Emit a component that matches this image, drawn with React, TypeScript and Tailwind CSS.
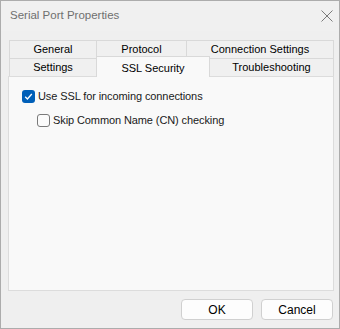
const font = { fontFamily: '"Liberation Sans", Arial, sans-serif' };

const Tab = ({ label, w, first }: { label: string; w: string; first?: boolean }) => (
  <div
    className={`${w} ${first ? "" : "-ml-px"} h-full flex items-center justify-center border border-b-0 border-[#d9d9d9] bg-[#f0f0f0] text-[11px] text-black`}
  >
    {label}
  </div>
);

const CheckRow = ({ label, checked, indent }: { label: string; checked?: boolean; indent?: boolean }) => (
  <div className={`flex items-center gap-[3px] h-[13px] ${indent ? "ml-[15px]" : ""}`}>
    {checked ? (
      <div className="w-[13px] h-[13px] rounded-[3px] bg-[#005fb8] flex items-center justify-center">
        <svg width="9" height="9" viewBox="0 0 9 9">
          <path d="M1.2 4.8 L3.4 7 L7.8 2" fill="none" stroke="#fff" strokeWidth="1.3" />
        </svg>
      </div>
    ) : (
      <div className="w-[13px] h-[13px] rounded-[3px] border border-[#7a7a7a] bg-[#fbfbfb]" />
    )}
    <span className="text-[11px] tracking-[-0.1px] text-[#1a1a1a] leading-none">{label}</span>
  </div>
);

export default function App() {
  return (
    <div style={font} className="w-[340px] h-[329px] border border-[#acacac] bg-[#efefef] flex flex-col">
      <div className="h-[30px] flex items-center justify-between pl-[9px] pr-[6px] bg-[#f0f0f0]">
        <span className="text-[11.5px] text-[#6f6f6f]">Serial Port Properties</span>
        <svg width="12" height="12" viewBox="0 0 12 12">
          <path d="M0.5 0.5 L11.5 11.5 M11.5 0.5 L0.5 11.5" stroke="#7a7a7a" strokeWidth="1" />
        </svg>
      </div>
      <div className="flex-1 flex flex-col pl-[7px] pr-[5px] pt-[9px] pb-[8px]">
        <div className="flex h-[18px] ml-[1px]">
          <Tab label="General" w="w-[88px]" first />
          <Tab label="Protocol" w="w-[91px]" />
          <Tab label="Connection Settings" w="w-[148px]" />
        </div>
        <div className="flex h-[18px] ml-[1px]">
          <Tab label="Settings" w="w-[88px]" first />
          <div className="relative z-10 -ml-px -mt-[2px] h-[21px] w-[114px] flex items-start justify-center pt-[3px] border border-b-0 border-[#d9d9d9] bg-[#f9f9f9] text-[11px] text-black">
            SSL Security
          </div>
          <Tab label="Troubleshooting" w="w-[125px]" />
        </div>
        <div className="h-[215px] border border-[#dcdcdc] bg-[#f9f9f9] flex flex-col gap-[11px] pl-[13px] pt-[13px]">
          <CheckRow label="Use SSL for incoming connections" checked />
          <CheckRow label="Skip Common Name (CN) checking" indent />
        </div>
        <div className="flex-1 flex items-end justify-end gap-[8px] pr-[1px]">
          <button className="w-[72px] h-[21px] rounded-[4px] border border-[#d0d0d0] bg-[#fdfdfd] text-[12px] text-black">
            OK
          </button>
          <button className="w-[72px] h-[21px] rounded-[4px] border border-[#d0d0d0] bg-[#fdfdfd] text-[12px] text-black">
            Cancel
          </button>
        </div>
      </div>
    </div>
  );
}
